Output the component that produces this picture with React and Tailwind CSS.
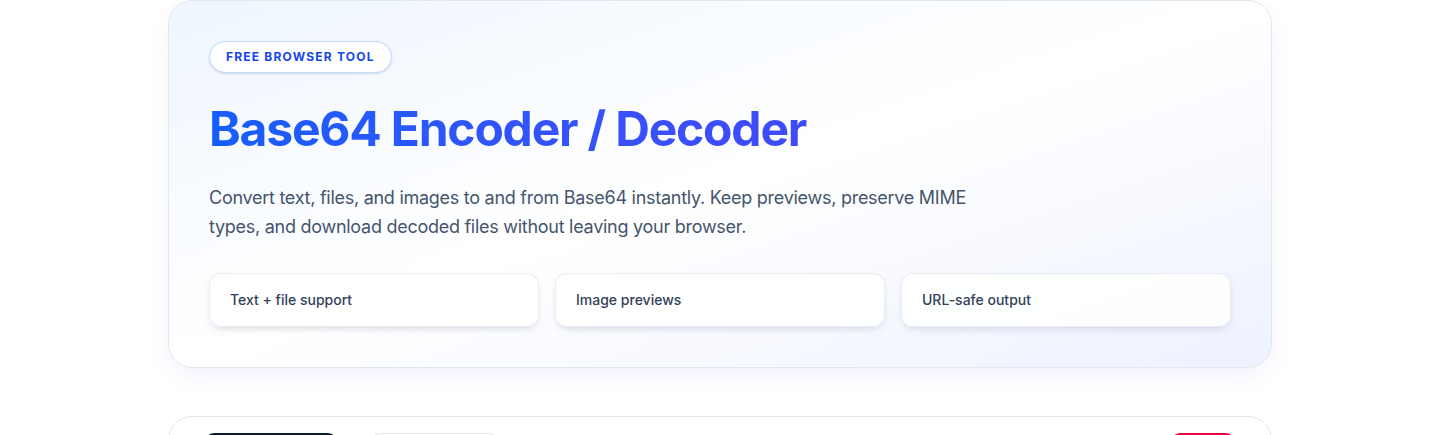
export default function App() {
  const features = ["Text + file support", "Image previews", "URL-safe output"];

  return (
    <div className="min-h-screen bg-white font-['Inter','Liberation_Sans',sans-serif] antialiased">
      <main className="mx-auto max-w-6xl px-6">
        <section className="rounded-3xl border border-slate-200 bg-gradient-to-br from-blue-50 via-white to-indigo-50 p-10 shadow-[0_10px_30px_-12px_rgba(99,102,241,0.18)]">
          <span className="inline-flex h-8 items-center rounded-full border border-blue-200 bg-white px-4 text-xs font-bold tracking-widest text-blue-700 shadow-sm">
            FREE BROWSER TOOL
          </span>

          <h1 className="mt-8 bg-gradient-to-r from-blue-600 to-indigo-600 bg-clip-text text-5xl leading-none font-bold tracking-tight text-transparent">
            <span className="pb-2">Base64 Encoder / Decoder</span>
          </h1>

          <p className="mt-[30px] max-w-3xl text-lg leading-relaxed tracking-[-0.015em] text-slate-600">
            Convert text, files, and images to and from Base64 instantly. Keep
            previews, preserve MIME types, and download decoded files without
            leaving your browser.
          </p>

          <div className="mt-[31px] grid grid-cols-3 gap-4">
            {features.map((f) => (
              <div
                key={f}
                className="rounded-xl border border-slate-200/80 bg-white/90 px-5 py-4 text-sm leading-5 font-medium text-slate-700 shadow-[0_4px_10px_-4px_rgba(100,116,139,0.35)]"
              >
                {f}
              </div>
            ))}
          </div>
        </section>

        {/* tool panel, only its top edge is in view */}
        <section className="mt-12 rounded-3xl border border-slate-200 bg-white px-[34px] pt-4 pb-6">
          <div className="flex items-center">
            <button aria-label="Encode" className="h-10 w-[136px] rounded-xl bg-slate-900" />
            <button aria-label="Decode" className="ml-[30px] h-10 w-[131px] rounded-xl border border-slate-200 bg-white" />
            <button aria-label="Clear" className="ml-auto h-10 w-[68px] rounded-xl bg-rose-600" />
          </div>
        </section>
      </main>
    </div>
  );
}
